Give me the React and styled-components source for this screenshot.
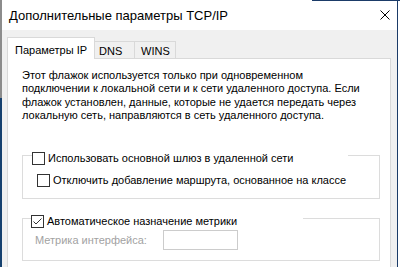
import React from 'react';
import styled, { createGlobalStyle } from 'styled-components';

const GlobalStyle = createGlobalStyle`
    html, body {
        margin: 0;
        padding: 0;
    }
    body {
        background: #ffffff;
        font-family: "Liberation Sans", Arial, sans-serif;
        font-size: 11px;
        color: #000;
    }
`

const Screen = styled.div`
    display: flex;
    width: 400px;
    height: 267px;
    overflow: hidden;
`

const LeftEdge = styled.div`
    width: 2px;
    display: flex;
    flex-direction: column;
`

const EdgeTop = styled.div`
    height: 98px;
    background: #8c8c8c;
`

const EdgeBottom = styled.div`
    flex: 1;
    background: #16416f;
`

const Window = styled.div`
    width: 395px;
    border-right: 1px solid #1b3b68;
    display: flex;
    flex-direction: column;
`

const TopEdge = styled.div`
    height: 1px;
    flex-shrink: 0;
    background: linear-gradient(to right, #ffffff 310px, #1b3b68 310px);
`

const RightEdge = styled.div`
    flex: 1;
    display: flex;
    flex-direction: column;
    background: #ffffff;
    &::before {
        content: '';
        height: 1px;
        background: #1b3b68;
    }
`

const TitleBar = styled.div`
    height: 29px;
    flex-shrink: 0;
    background: #ffffff;
    display: flex;
    align-items: center;
    padding: 0 7px;
`

const Title = styled.div`
    flex: 1;
    font-size: 13px;
    white-space: nowrap;
    margin-top: -1px;
`

const Body = styled.div`
    flex: 1;
    background: #f0f0f0;
    padding: 7px 6px 0 5px;
    display: flex;
    flex-direction: column;
`

const TabRow = styled.div`
    display: flex;
    align-items: flex-end;
    height: 21px;
    position: relative;
    z-index: 1;
`

const Tab = styled.div`
    box-sizing: border-box;
    width: ${p => p.w}px;
    height: ${p => (p.active ? 22 : 17)}px;
    margin-bottom: ${p => (p.active ? -1 : 0)}px;
    background: ${p => (p.active ? '#ffffff' : '#f0f0f0')};
    border: 1px solid #d9d9d9;
    border-bottom: none;
    border-left: ${p => (p.first ? '1px solid #d9d9d9' : 'none')};
    display: flex;
    align-items: center;
    padding: 2px 0 0 ${p => p.inset}px;
    font-size: 11px;
    white-space: nowrap;
`

const Panel = styled.div`
    flex: 1;
    background: #ffffff;
    border: 1px solid #d9d9d9;
    border-bottom: none;
    padding: 10px 0 0 14px;
    display: flex;
    flex-direction: column;
`

const Paragraph = styled.p`
    margin: 0;
    line-height: 13.33px;
    white-space: nowrap;
`

const GroupBox = styled.div`
    box-sizing: border-box;
    width: 358px;
    margin-top: ${p => p.top}px;
    border: 1px solid #dcdcdc;
    padding-bottom: ${p => p.bottom}px;
    display: flex;
    flex-direction: column;
`

const Header = styled.div`
    width: ${p => p.w}px;
    margin: -4px 0 0 ${p => p.left}px;
    background: #ffffff;
    display: flex;
    align-items: center;
`

const CheckRow = styled.div`
    display: flex;
    align-items: center;
    margin: ${p => p.top}px 0 0 ${p => p.left}px;
`

const Box = styled.div`
    box-sizing: border-box;
    width: 13px;
    height: 13px;
    flex-shrink: 0;
    border: 1px solid #333333;
    background: #ffffff;
    display: flex;
`

const Label = styled.span`
    margin-left: 3px;
    line-height: 13px;
    white-space: nowrap;
`

const FieldRow = styled.div`
    display: flex;
    align-items: center;
    margin: 2px 0 0 12px;
`

const FieldLabel = styled.span`
    width: 128px;
    color: #a2a2a2;
    white-space: nowrap;
`

const FieldInput = styled.div`
    box-sizing: border-box;
    width: 75px;
    height: 20px;
    border: 1px solid #cccccc;
    background: #ffffff;
`

const Check = ({ checked, label }) => (
    <>
        <Box>
            {checked && (
                <svg width="11" height="11" viewBox="0 0 11 11">
                    <polyline points="1.5,5.5 4,8 9.5,2.5" fill="none" stroke="#333" strokeWidth="1" />
                </svg>
            )}
        </Box>
        <Label>{label}</Label>
    </>
)

const CloseIcon = () => (
    <svg width="10" height="10" viewBox="0 0 10 10" style={{ marginTop: -1 }}>
        <path d="M0.5 0.5 L9.5 9.5 M9.5 0.5 L0.5 9.5" stroke="#000" strokeWidth="1" />
    </svg>
)

export default function App() {
    return (
        <Screen>
            <GlobalStyle />
            <LeftEdge>
                <EdgeTop />
                <EdgeBottom />
            </LeftEdge>
            <Window>
                <TopEdge />
                <TitleBar>
                    <Title>Дополнительные параметры TCP/IP</Title>
                    <CloseIcon />
                </TitleBar>
                <Body>
                    <TabRow>
                        <Tab active first w={88} inset={7}>Параметры IP</Tab>
                        <Tab w={40} inset={4}>DNS</Tab>
                        <Tab w={41} inset={6}>WINS</Tab>
                    </TabRow>
                    <Panel>
                        <Paragraph>
                            Этот флажок используется только при одновременном<br />
                            подключении к локальной сети и к сети удаленного доступа. Если<br />
                            флажок установлен, данные, которые не удается передать через<br />
                            локальную сеть, направляются в сеть удаленного доступа.
                        </Paragraph>
                        <GroupBox top={33} bottom={11}>
                            <Header w={316} left={9}>
                                <Check label="Использовать основной шлюз в удаленной сети" />
                            </Header>
                            <CheckRow top={9} left={14}>
                                <Check label="Отключить добавление маршрута, основанное на классе" />
                            </CheckRow>
                        </GroupBox>
                        <GroupBox top={19} bottom={10}>
                            <Header w={272} left={8}>
                                <Check checked label="Автоматическое назначение метрики" />
                            </Header>
                            <FieldRow>
                                <FieldLabel>Метрика интерфейса:</FieldLabel>
                                <FieldInput />
                            </FieldRow>
                        </GroupBox>
                    </Panel>
                </Body>
            </Window>
            <RightEdge />
        </Screen>
    )
}
